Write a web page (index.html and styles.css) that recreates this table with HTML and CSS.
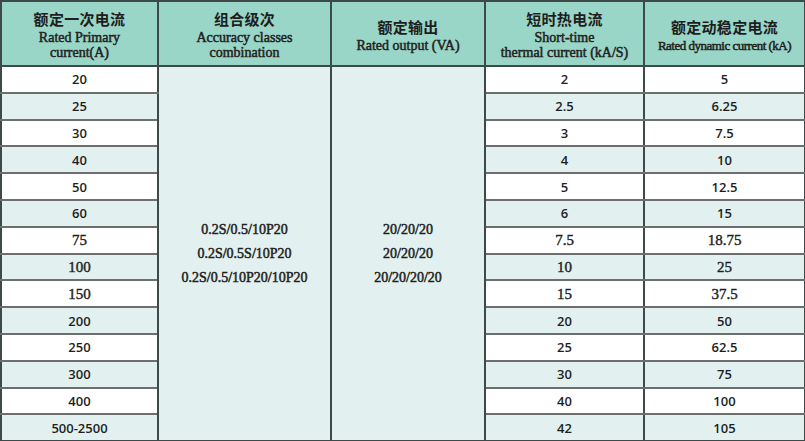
FILE: index.html
```html
<!DOCTYPE html>
<html>
<head>
<meta charset="utf-8">
<link rel="stylesheet" href="styles.css">
</head>
<body>
<table class="spec">
  <colgroup>
    <col class="c1"><col class="c2"><col class="c3"><col class="c4"><col class="c5">
  </colgroup>
  <thead>
    <tr>
      <th><div class="zh">额定一次电流</div><div class="en">Rated Primary<br>current(A)</div></th>
      <th><div class="zh">组合级次</div><div class="en">Accuracy classes<br>combination</div></th>
      <th><div class="zh">额定输出</div><div class="en">Rated output (VA)</div></th>
      <th><div class="zh">短时热电流</div><div class="en">Short-time<br>thermal current (kA/S)</div></th>
      <th><div class="zh">额定动稳定电流</div><div class="en narrow">Rated dynamic current (kA)</div></th>
    </tr>
  </thead>
  <tbody>
    <tr class="w"><td>20</td>
      <td class="merged" rowspan="14"><div>0.2S/0.5/10P20</div><div>0.2S/0.5S/10P20</div><div>0.2S/0.5/10P20/10P20</div></td>
      <td class="merged" rowspan="14"><div>20/20/20</div><div>20/20/20</div><div>20/20/20/20</div></td>
      <td>2</td><td>5</td></tr>
    <tr class="l"><td>25</td><td>2.5</td><td>6.25</td></tr>
    <tr class="w"><td>30</td><td>3</td><td>7.5</td></tr>
    <tr class="l"><td>40</td><td>4</td><td>10</td></tr>
    <tr class="w"><td>50</td><td>5</td><td>12.5</td></tr>
    <tr class="l"><td>60</td><td>6</td><td>15</td></tr>
    <tr class="w serif"><td>75</td><td>7.5</td><td>18.75</td></tr>
    <tr class="l serif"><td>100</td><td>10</td><td>25</td></tr>
    <tr class="w serif"><td>150</td><td>15</td><td>37.5</td></tr>
    <tr class="l"><td>200</td><td>20</td><td>50</td></tr>
    <tr class="w"><td>250</td><td>25</td><td>62.5</td></tr>
    <tr class="l"><td>300</td><td>30</td><td>75</td></tr>
    <tr class="w"><td>400</td><td>40</td><td>100</td></tr>
    <tr class="l"><td>500-2500</td><td>42</td><td>105</td></tr>
  </tbody>
</table>
</body>
</html>
```
FILE: styles.css
```css
html, body {
  margin: 0;
  padding: 0;
  background: #ffffff;
}
.spec {
  border-collapse: collapse;
  table-layout: fixed;
  width: 804px;
  color: #222;
  font-family: "Open Sans", "DejaVu Sans", sans-serif;
}
.c1 { width: 157px; }
.c2 { width: 173px; }
.c3 { width: 154px; }
.c4 { width: 159px; }
.c5 { width: 161px; }
.spec thead tr { height: 65px; }
.spec tbody tr { height: 26.8px; }
.spec th {
  background: #99d6c7;
  border: 2px solid #3d4a48;
  padding: 0;
  vertical-align: middle;
  font-weight: normal;
}
.zh {
  font-family: "Noto Sans CJK SC", sans-serif;
  font-weight: 700;
  font-size: 15px;
  letter-spacing: 0.3px;
  line-height: 20px;
  color: #1e1e1e;
  margin-bottom: 1px;
  padding-top: 2px;
}
.en {
  font-family: "Liberation Serif", serif;
  font-size: 14px;
  line-height: 15px;
  color: #222;
  -webkit-text-stroke: 0.5px #222;
}
.en.narrow {
  font-size: 13px;
  letter-spacing: -0.5px;
}
.spec td {
  padding: 0;
  text-align: center;
  vertical-align: middle;
  font-size: 13px;
  font-weight: 600;
  line-height: 16px;
  color: #1e1e1e;
  border-top: 2px solid #6b6f6e;
  border-bottom: 2px solid #6b6f6e;
  border-left: 2px solid #3d4a48;
  border-right: 2px solid #3d4a48;
}
.spec tr.w td { background: #ffffff; }
.spec tr.l td { background: #e2f1ef; }
.spec tr.serif td {
  font-family: "Liberation Serif", serif;
  font-size: 15px;
  font-weight: normal;
  -webkit-text-stroke: 0.4px #222;
}
.spec tbody tr:last-child td { border-bottom: 2px solid #3d4a48; }
.spec tr td.merged {
  background: #e2f1ef;
  font-family: "Liberation Serif", serif;
  font-size: 14px;
  font-weight: normal;
  -webkit-text-stroke: 0.5px #222;
  line-height: 24px;
  border-top: 2px solid #3d4a48;
  border-bottom: 2px solid #3d4a48;
}
```
